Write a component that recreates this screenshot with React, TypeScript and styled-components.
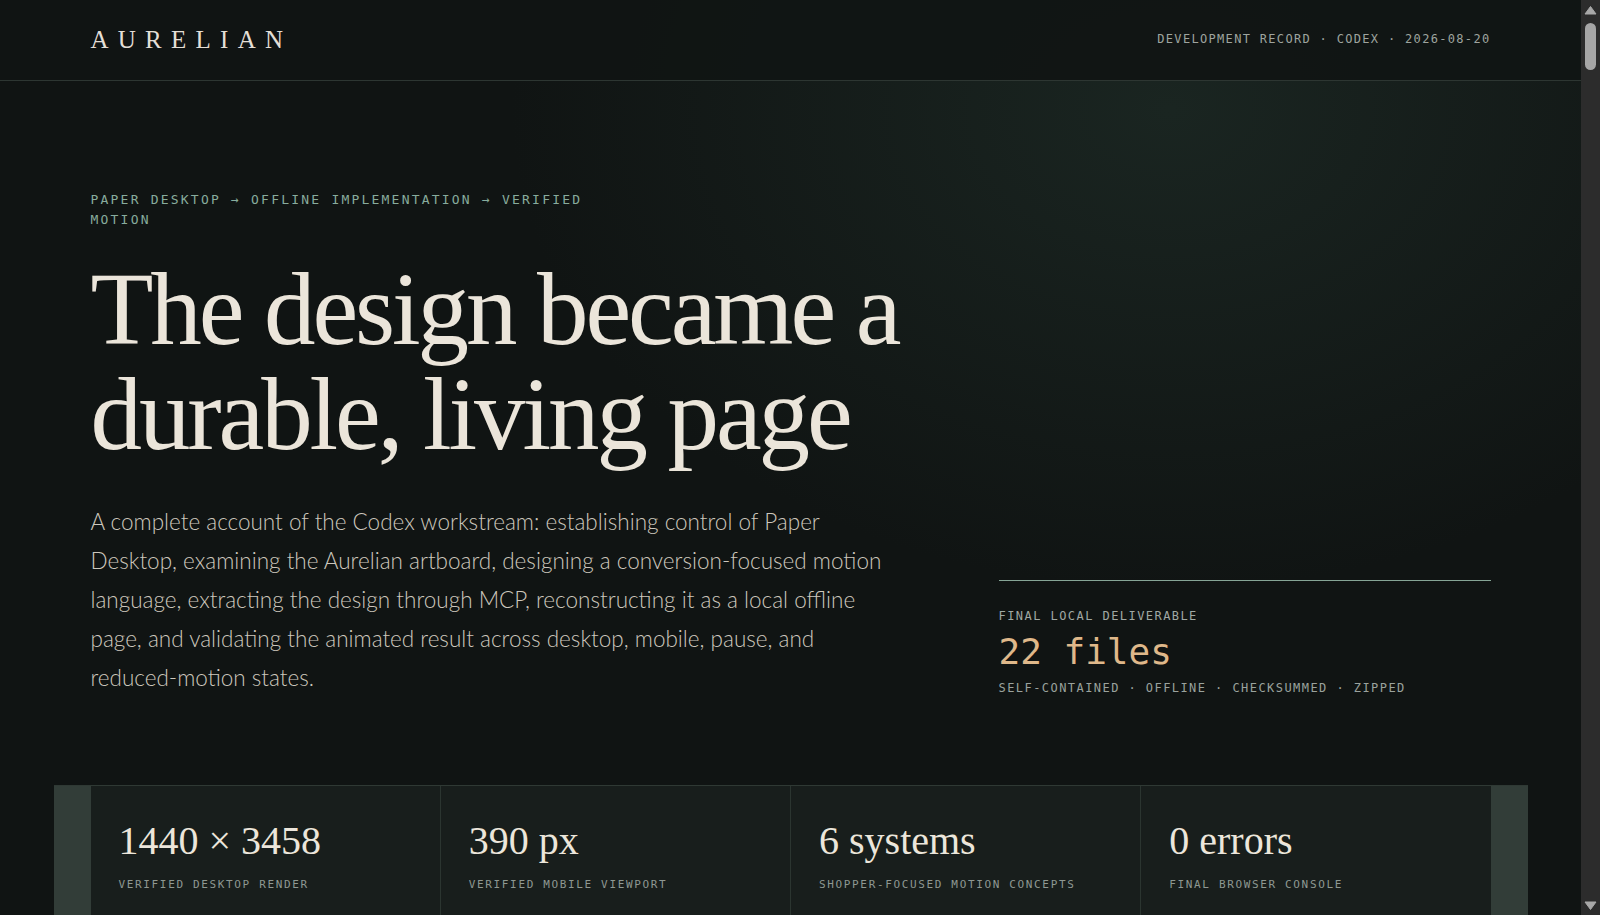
import React from "react";
import styled, { createGlobalStyle } from "styled-components";

const GlobalStyle = createGlobalStyle`
  html, body {
    margin: 0;
    height: 100%;
    overflow: hidden;
    color-scheme: dark;
    background: #101413;
  }
  body {
    color: #e9e3d9;
    font-family: Lato, "Noto Sans", sans-serif;
  }
`;

const Shell = styled.div`
  display: flex;
  height: 100vh;
`;

const Page = styled.div`
  flex: 1;
  min-width: 0;
  overflow-y: auto;
  scrollbar-width: none;
  background:
    radial-gradient(ellipse 660px 480px at 74% 110px, rgba(36, 54, 47, 0.5), rgba(16, 20, 19, 0) 100%)
      no-repeat,
    #101413;
  &::-webkit-scrollbar {
    display: none;
  }
`;

// drawn stand-in for the browser scrollbar seen in the capture
const Rail = styled.div`
  width: 19px;
  flex: none;
  background: #2c2c2c;
  display: flex;
  flex-direction: column;
  align-items: center;
  padding: 6px 0 5px;
  box-sizing: border-box;
`;

const Thumb = styled.div`
  width: 11px;
  height: 47px;
  margin-top: 8px;
  border-radius: 6px;
  background: #a6a6a6;
`;

const RailSpacer = styled.div`
  flex: 1;
`;

const Header = styled.header`
  height: 80px;
  border-bottom: 1px solid #2d3632;
  background: rgba(17, 21, 20, 0.96);
`;

const HeaderInner = styled.div`
  max-width: 1400px;
  height: 100%;
  margin: 0 auto;
  display: flex;
  align-items: center;
  justify-content: space-between;
`;

const Logo = styled.div`
  font-family: "Liberation Serif", serif;
  font-size: 25px;
  letter-spacing: 0.37em;
  color: #e4dfd6;
`;

const Meta = styled.div`
  font-family: "DejaVu Sans Mono", monospace;
  font-size: 12px;
  letter-spacing: 0.11em;
  color: #9ea49f;
  margin-top: -3px;
`;

const Hero = styled.section`
  max-width: 1400px;
  margin: 0 auto;
  padding: 109px 0 88px;
  display: grid;
  grid-template-columns: minmax(0, 1fr) 492px;
  column-gap: 88px;
  align-items: end;
`;

const Eyebrow = styled.div`
  max-width: 520px;
  font-family: "DejaVu Sans Mono", monospace;
  font-size: 13px;
  line-height: 20px;
  letter-spacing: 0.17em;
  color: #88ac9d;
`;

const Title = styled.h1`
  margin: 27px 0 0;
  font-family: "Liberation Serif", serif;
  font-weight: 400;
  font-size: 103px;
  line-height: 105px;
  letter-spacing: -0.03em;
  color: #ebe5da;
`;

const Lede = styled.p`
  margin: 35px 0 0;
  max-width: 812px;
  font-family: Lato, "Noto Sans", sans-serif;
  font-weight: 300;
  font-size: 22.5px;
  line-height: 39px;
  color: #cdc7bd;
`;

const Deliverable = styled.div`
  border-top: 1px solid #86a596;
  padding-top: 26px;
`;

const MonoLine = styled.div<{ $tone?: string }>`
  font-family: "DejaVu Sans Mono", monospace;
  font-size: 12px;
  line-height: 18px;
  letter-spacing: 0.12em;
  color: ${(p) => p.$tone || "#a0a8a3"};
`;

const Count = styled.div`
  margin: 5px 0 6px;
  font-family: "DejaVu Sans Mono", monospace;
  font-size: 36px;
  line-height: 43px;
  color: #dfb88a;
`;

const Band = styled.section`
  max-width: 1400px;
  margin: 0 auto;
  padding: 0 37px;
  background: #323d38;
  border-top: 1px solid #2f3934;
`;

const StatGrid = styled.div`
  display: grid;
  grid-template-columns: repeat(4, 1fr);
  gap: 1px;
  background: #2b3530;
`;

const StatCell = styled.div`
  background: #181e1c;
  min-height: 170px;
  padding: 33px 28px 30px;
`;

const StatValue = styled.div`
  font-family: "Liberation Serif", serif;
  font-size: 40px;
  line-height: 44px;
  color: #ece6db;
`;

const StatLabel = styled.div`
  margin-top: 13px;
  font-family: "DejaVu Sans Mono", monospace;
  font-size: 11px;
  line-height: 18px;
  letter-spacing: 0.15em;
  color: #8e9892;
`;

const Record = styled.main`
  max-width: 1400px;
  margin: 0 auto;
  padding: 120px 0;
`;

const Chapter = styled.article`
  min-height: 1300px;
  border-top: 1px solid #2d3632;
  padding-top: 40px;
`;

const ChapterTitle = styled.h2`
  margin: 16px 0 0;
  font-family: "Liberation Serif", serif;
  font-weight: 400;
  font-size: 56px;
  color: #ebe5da;
`;

const stats = [
  { value: "1440 × 3458", label: "VERIFIED DESKTOP RENDER" },
  { value: "390 px", label: "VERIFIED MOBILE VIEWPORT" },
  { value: "6 systems", label: "SHOPPER-FOCUSED MOTION CONCEPTS" },
  { value: "0 errors", label: "FINAL BROWSER CONSOLE" },
];

const chapters = [
  "Establishing control of Paper Desktop",
  "Examining the Aurelian artboard",
  "Designing the motion language",
  "Extracting the design through MCP",
  "Reconstructing the page offline",
  "Building the motion systems",
  "Validating on desktop",
  "Validating on mobile",
  "Pause and reduced-motion states",
  "Packaging the deliverable",
  "Checksums and archive",
  "Final notes",
];

const Arrow = ({ down }: { down?: boolean }) => (
  <svg width="13" height="9" viewBox="0 0 13 9">
    <path
      d={down ? "M1 1 H12 L6.5 8.5 Z" : "M1 8 H12 L6.5 0.5 Z"}
      fill="#a8a8a8"
      stroke="#a8a8a8"
      strokeWidth="1"
      strokeLinejoin="round"
    />
  </svg>
);

export default function App() {
  return (
    <Shell>
      <GlobalStyle />
      <Page>
        <Header>
          <HeaderInner>
            <Logo>AURELIAN</Logo>
            <Meta>DEVELOPMENT RECORD · CODEX · 2026-08-20</Meta>
          </HeaderInner>
        </Header>

        <Hero>
          <div>
            <Eyebrow>PAPER DESKTOP → OFFLINE IMPLEMENTATION → VERIFIED MOTION</Eyebrow>
            <Title>The design became a durable, living page</Title>
            <Lede>
              A complete account of the Codex workstream: establishing control of Paper Desktop,
              examining the Aurelian artboard, designing a conversion-focused motion language,
              extracting the design through MCP, reconstructing it as a local offline page, and
              validating the animated result across desktop, mobile, pause, and reduced-motion
              states.
            </Lede>
          </div>
          <Deliverable>
            <MonoLine>FINAL LOCAL DELIVERABLE</MonoLine>
            <Count>22 files</Count>
            <MonoLine $tone="#9aa29d">SELF-CONTAINED · OFFLINE · CHECKSUMMED · ZIPPED</MonoLine>
          </Deliverable>
        </Hero>

        <Band>
          <StatGrid>
            {stats.map((s) => (
              <StatCell key={s.label}>
                <StatValue>{s.value}</StatValue>
                <StatLabel>{s.label}</StatLabel>
              </StatCell>
            ))}
          </StatGrid>
        </Band>

        <Record>
          {chapters.map((c, i) => (
            <Chapter key={c}>
              <MonoLine $tone="#88ac9d">{String(i + 1).padStart(2, "0")} · RECORD</MonoLine>
              <ChapterTitle>{c}</ChapterTitle>
            </Chapter>
          ))}
        </Record>
      </Page>
      <Rail>
        <Arrow />
        <Thumb />
        <RailSpacer />
        <Arrow down />
      </Rail>
    </Shell>
  );
}
